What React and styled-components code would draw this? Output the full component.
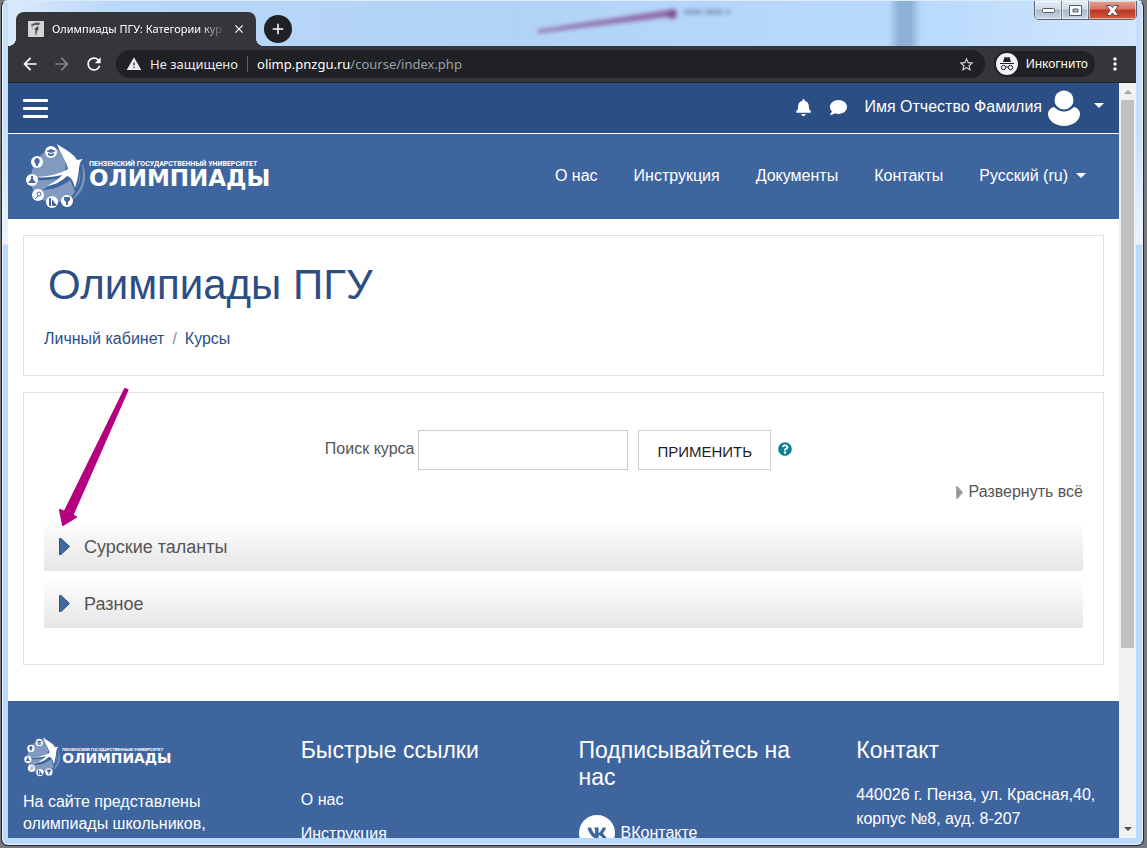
import React from "react";
import styled, { createGlobalStyle } from "styled-components";
import { FaBell, FaComment, FaQuestionCircle, FaVk } from "react-icons/fa";
import {
  MdAdd,
  MdArrowBack,
  MdArrowForward,
  MdClose,
  MdMoreVert,
  MdRefresh,
  MdStarBorder,
  MdWarning,
} from "react-icons/md";

const GlobalStyle = createGlobalStyle`
  * {
    box-sizing: border-box;
  }
  body {
    margin: 0;
    background: #77797c;
    font-family: "Liberation Sans", Arial, sans-serif;
    font-size: 16px;
    line-height: 24px;
  }
  button {
    padding: 0;
    border: 0;
    background: none;
    color: inherit;
    font: inherit;
  }
  a {
    color: inherit;
    text-decoration: none;
  }
  svg {
    display: block;
  }
  h1, h2, p, ul {
    margin: 0;
    padding: 0;
    font-weight: normal;
    list-style: none;
  }
`;

const Window = styled.div`
  position: relative;
  display: flex;
  flex-direction: column;
  height: calc(100vh - 2px);
  margin: 0 3px 2px 1px;
  padding: 0 7px 7px 6px;
  overflow: hidden;
  border: 1px solid #1f2733;
  border-top-color: #dcebf8;
  border-radius: 7px;
  box-shadow: inset 0 0 0 1px #e9f4ff;
  background: linear-gradient(
    #c4dffb 0,
    #c6e0fc 130px,
    #edf5fe 243px,
    #b9dafd 244px
  );
`;

const TitleBar = styled.div`
  display: flex;
  align-items: flex-end;
  flex: none;
  height: 45px;
  padding-left: 8px;
  background: linear-gradient(
    90deg,
    #dbeafc 0,
    #b9d7f8 110px,
    #b2d3f6 45%,
    #b8dafd 78%,
    #8db0d6 79%,
    #8db0d6 80%,
    #b8dafd 81%,
    #d2e6fd 100%
  );
`;

const Tab = styled.div`
  position: relative;
  display: flex;
  align-items: center;
  width: 240px;
  height: 34px;
  padding: 0 10px 0 12px;
  border-radius: 8px 8px 0 0;
  background: #35363a;
  color: #fff;
  font: 11px/16px "Noto Sans", sans-serif;
  &::before,
  &::after {
    content: "";
    position: absolute;
    bottom: 0;
    width: 8px;
    height: 8px;
  }
  &::before {
    left: -8px;
    background: radial-gradient(circle at 0 0, transparent 8px, #35363a 8px);
  }
  &::after {
    right: -8px;
    background: radial-gradient(circle at 100% 0, transparent 8px, #35363a 8px);
  }
`;

const TabTitle = styled.span`
  flex: 1;
  margin: 0 6px 0 8px;
  white-space: nowrap;
  mask-image: linear-gradient(90deg, #000 85%, transparent);
`;

const IconButton = styled.button`
  display: flex;
  align-items: center;
  justify-content: center;
  flex: none;
  width: ${(props) => props.$size || 32}px;
  height: ${(props) => props.$size || 32}px;
  color: ${(props) => props.$color || "#fff"};
`;

const NewTab = styled(IconButton)`
  margin: 0 0 3px 8px;
  border-radius: 50%;
  background: #202124;
`;

const Blur = styled.svg`
  position: absolute;
  top: 0;
  left: 518px;
  width: 230px;
  height: 44px;
  filter: blur(2px);
`;

const Controls = styled.div`
  position: absolute;
  top: -1px;
  right: 6px;
  display: flex;
  border: 1px solid #59636f;
  border-radius: 0 0 5px 5px;
  overflow: hidden;
`;

const Control = styled.button`
  display: flex;
  align-items: center;
  justify-content: center;
  width: ${(props) => (props.$close ? 47 : 27)}px;
  height: 18px;
  border-right: ${(props) => (props.$close ? 0 : "1px solid #6d7886")};
  box-shadow: inset 0 0 0 1px #ffffff88;
  background: ${(props) =>
    props.$close
      ? "linear-gradient(#e3a091, #d67463 45%, #bc3524 50%, #d15c3c)"
      : "linear-gradient(#e7edf5, #cfd9e6 45%, #a9b9cb 50%, #c7d7e8)"};
`;

const Toolbar = styled.div`
  display: flex;
  align-items: center;
  flex: none;
  height: 37px;
  padding-right: 5px;
  border-bottom: 1px solid #27282b;
  background: #35363a;
  color: #fff;
`;

const NavButtons = styled.div`
  display: flex;
  width: 108px;
  padding-left: 6px;
`;

const AddressBar = styled.div`
  display: flex;
  align-items: center;
  flex: 1;
  height: 28px;
  padding: 0 2px 0 10px;
  border-radius: 14px;
  background: #202124;
  color: #e8eaed;
  font: 13px/20px "Noto Sans", sans-serif;
`;

const Security = styled.span`
  margin-left: 8px;
  padding-right: 9px;
  border-right: 1px solid #5f6368;
  line-height: 16px;
`;

const Url = styled.span`
  flex: 1;
  margin-left: 9px;
  color: #9aa0a6;
  b {
    color: #fff;
    font-weight: normal;
  }
`;

const Incognito = styled.div`
  display: flex;
  align-items: center;
  gap: 8px;
  height: 26px;
  margin: 0 4px 0 9px;
  padding: 0 7px 0 2px;
  border-radius: 13px;
  background: #202124;
  font: 12px/16px "Noto Sans", sans-serif;
`;

const Viewport = styled.div`
  display: flex;
  flex: 1;
  min-height: 0;
`;

const Page = styled.div`
  flex: 1;
  overflow: hidden;
  background: #fff;
`;

const Scrollbar = styled.div`
  display: flex;
  flex-direction: column;
  align-items: center;
  width: 17px;
  background: #f1f1f1;
`;

const ScrollTrack = styled.div`
  flex: 1;
  width: 13px;
`;

const ScrollThumb = styled.div`
  height: 76%;
  background: #c1c1c1;
`;

const UserBar = styled.div`
  display: flex;
  align-items: center;
  height: 51px;
  padding: 0 15px;
  border-bottom: 1px solid #fff;
  background: #2b4e84;
  color: #fff;
`;

const MenuButton = styled.button`
  display: flex;
  flex-direction: column;
  gap: 5px;
  margin-right: auto;
  span {
    width: 25px;
    height: 3px;
    border-radius: 1px;
    background: #fff;
  }
`;

const BarIcon = styled(IconButton)`
  width: 35px;
  padding-bottom: 2px;
`;

const UserMenu = styled.button`
  display: flex;
  align-items: center;
  margin-left: 8px;
  padding-bottom: 2px;
  white-space: nowrap;
`;

const Avatar = styled.svg`
  margin: 2px 13px 0 5px;
`;

const Caret = styled.span`
  display: inline-block;
  margin-bottom: ${(props) => (props.$raised ? 4 : 0)}px;
  border: 5px solid transparent;
  border-top-color: #fff;
  border-bottom: 0;
`;

const Header = styled.header`
  display: flex;
  align-items: center;
  justify-content: space-between;
  height: 85px;
  padding: 0 33px 0 16px;
  background: #3f659f;
  color: #fff;
`;

const Nav = styled.nav`
  display: flex;
  align-items: center;
  gap: 36px;
  padding-bottom: 2px;
  button {
    display: flex;
    align-items: center;
    gap: 8px;
  }
`;

const Main = styled.main`
  display: flex;
  flex-direction: column;
  gap: 16px;
  padding: 16px 15px 36px;
`;

const Card = styled.section`
  padding: ${(props) => props.$padding};
  border: 1px solid #dee0e2;
  color: #555;
`;

const PageTitle = styled.h1`
  padding-left: 4px;
  color: #2b4e84;
  font-size: 42px;
  line-height: 50px;
`;

const Breadcrumbs = styled.nav`
  display: flex;
  gap: 8px;
  margin-top: 17px;
  color: #2b4e84;
  span {
    color: #868e96;
  }
`;

const SearchForm = styled.form`
  display: flex;
  align-items: center;
  justify-content: center;
  padding-right: 10px;
  label {
    margin: 0 4px 2px 0;
  }
`;

const SearchInput = styled.input`
  width: 210px;
  height: 40px;
  padding: 0 12px;
  border: 1px solid #c9cccf;
  font: inherit;
`;

const SubmitButton = styled.button`
  height: 40px;
  margin: 0 7px 0 10px;
  padding: 4px 18px 0;
  border: 1px solid #ced1d4;
  color: #1d2125;
  font-size: 15px;
`;

const HelpButton = styled(IconButton)`
  width: 14px;
  padding-bottom: 2px;
  color: #0c7f95;
`;

const ExpandAll = styled.button`
  display: flex;
  align-items: center;
  gap: 6px;
  margin: 10px 0 20px auto;
  color: #555;
`;

const Categories = styled.ul`
  display: flex;
  flex-direction: column;
  gap: 10px;
`;

const Category = styled.button`
  display: flex;
  align-items: center;
  gap: 14px;
  width: 100%;
  height: 47px;
  padding: 0 0 2px 15px;
  background: linear-gradient(#fdfdfd, #e6e6e6);
  font-size: 18px;
`;

const Footer = styled.footer`
  display: grid;
  grid-template-columns: repeat(4, 1fr);
  padding: 36px 0;
  background: #3f659f;
  color: #fff;
`;

const FooterColumn = styled.div`
  min-width: 0;
  padding: 0 15px;
`;

const About = styled.p`
  margin-top: 13px;
  line-height: 22px;
`;

const FooterTitle = styled.h2`
  margin-bottom: ${(props) => props.$gap}px;
  font-size: 23px;
  line-height: 27px;
`;

const FooterLinks = styled.ul`
  display: flex;
  flex-direction: column;
  gap: 10px;
`;

const Social = styled.a`
  display: flex;
  align-items: center;
  gap: 6px;
`;

const SocialIcon = styled.span`
  display: flex;
  align-items: center;
  justify-content: center;
  width: 36px;
  height: 36px;
  border-radius: 50%;
  background: #fff;
  color: #3f659f;
`;

const Pointer = styled.svg`
  position: absolute;
  top: 385px;
  left: 52px;
  pointer-events: none;
`;

function Triangle({ width, height, color, stroke }) {
  return (
    <svg width={width} height={height} viewBox='0 0 11 17' preserveAspectRatio='none'>
      <path d='M.5.5h1.5l8.5 8-8.5 8H.5z' fill={color} stroke={stroke || color} />
    </svg>
  );
}

function Logo({ width }) {
  return (
    <svg width={width} viewBox='0 0 249 68' role='img' aria-label='Олимпиады'>
      <path
        d='M18 11C27 2 43 5 51 15c8 10 7 27-3 38-9 8-26 9-35 0C3 42 6 22 18 11Z'
        fill='#819abf'
      />
      <path d='M57 19c5 15 0 29-11 39 16-8 19-28 11-39Z' fill='#7893bd' />
      <path
        d='M31 0c9 7 21 9 23 17l6 0c-5 7-3 16-8 33-3-5-4-10-6-13-8 6-16 10-28 10 6-4 13-7 19-12-11 2-25 4-33-1 13 1 24-2 36-4C46 18 35 10 31 0Z'
        fill='#3f659f'
      />
      <path
        d='M33 1c9 6 17 10 20 16l6-1c-6 5-2 12-8 29-2-8-4-11-8-12-6 6-13 9-20 10 6-3 12-7 15-11-9 2-19 3-29 2 16 0 29-4 35-8C43 19 36 10 33 1Z'
        fill='#fff'
      />
      <g fill='#fff'>
        <circle cx='27' cy='9' r='6' />
        <circle cx='13' cy='19' r='6' />
        <circle cx='8' cy='37' r='6' />
        <circle cx='14' cy='52' r='6' />
        <circle cx='28' cy='59' r='6' />
        <circle cx='43' cy='58' r='6' />
      </g>
      <g fill='#48699d'>
        <path d='m22 8 5-2 5 2-5 2zM24 10l3 1 3-1v2q-3 2-6 0z' />
        <path d='M13 15a3 3 0 0 1 2 5l-1 2h-2l-1-2a3 3 0 0 1 2-5zM12 22h2v1h-2z' />
        <path d='M7 33h2v3l3 4H4l3-4z' />
        <path d='M25 55h2v8h-2zM28 56l5 7h-5z' />
        <path d='M40 54h6v3l-2 2v3h-2v-3l-2-2z' />
      </g>
      <circle cx='15' cy='51' r='2' fill='none' stroke='#48699d' />
      <path d='m14 53-3 3' stroke='#48699d' />
      <text
        x='65'
        y='23'
        fill='#fff'
        fontFamily='Roboto, sans-serif'
        fontWeight='700'
        fontSize='7'
      >
        ПЕНЗЕНСКИЙ ГОСУДАРСТВЕННЫЙ УНИВЕРСИТЕТ
      </text>
      <text
        x='65'
        y='43'
        fill='#fff'
        fontFamily='DejaVu Sans, sans-serif'
        fontWeight='700'
        fontSize='23'
      >
        ОЛИМПИАДЫ
      </text>
    </svg>
  );
}

function BrowserChrome() {
  return (
    <>
      <TitleBar>
        <Blur viewBox='0 0 230 44' aria-hidden='true'>
          <path d='M17 29 148 9v7L18 32z' fill='#8f67a6' />
          <circle cx='152' cy='13' r='5' fill='#804f94' />
          <path d='M164 11h46' stroke='#87a4c9' strokeWidth='5' strokeDasharray='18 3' />
        </Blur>
        <Tab>
          <svg width='16' height='16' viewBox='0 0 16 16'>
            <rect width='16' height='16' rx='1' fill='#d5d5d5' />
            <path
              d='M3 4q4-3 9-2l-1 2q-4-1-7 1zM4 5.500l.500 3M8 6.500l2-1 .500 3-1.500 1-.500 4h-1V9l-1-1z'
              fill='#444'
              stroke='#777'
              strokeWidth='.5'
            />
          </svg>
          <TabTitle>Олимпиады ПГУ: Категории кур</TabTitle>
          <IconButton $size={14} aria-label='Закрыть вкладку'>
            <MdClose size={14} />
          </IconButton>
        </Tab>
        <NewTab $size={28} aria-label='Новая вкладка'>
          <MdAdd size={18} />
        </NewTab>
        <Controls>
          <Control aria-label='Свернуть'>
            <svg width='13' height='6'>
              <rect x='.5' y='1.5' width='12' height='4' rx='1' fill='#fff' stroke='#525b68' />
            </svg>
          </Control>
          <Control aria-label='Развернуть'>
            <svg width='13' height='11'>
              <path
                d='M.5.5h12v10H.5zM4 4v3h5V4z'
                fill='#fff'
                fillRule='evenodd'
                stroke='#525b68'
              />
            </svg>
          </Control>
          <Control $close aria-label='Закрыть'>
            <svg width='13' height='11' viewBox='0 0 13 11'>
              <path
                d='M.5.5h4l2 2 2-2h4L9 5.500l3.500 5h-4l-2-2.500-2 2.500h-4L4 5.500z'
                fill='#fff'
                stroke='#5c4550'
              />
            </svg>
          </Control>
        </Controls>
      </TitleBar>
      <Toolbar>
        <NavButtons>
          <IconButton aria-label='Назад'>
            <MdArrowBack size={20} />
          </IconButton>
          <IconButton $color='#85878a' aria-label='Вперёд'>
            <MdArrowForward size={20} />
          </IconButton>
          <IconButton aria-label='Обновить'>
            <MdRefresh size={20} />
          </IconButton>
        </NavButtons>
        <AddressBar>
          <MdWarning size={16} />
          <Security>Не защищено</Security>
          <Url>
            <b>olimp.pnzgu.ru</b>/course/index.php
          </Url>
          <IconButton $color='#d0d2d5' aria-label='В закладки'>
            <MdStarBorder size={17} />
          </IconButton>
        </AddressBar>
        <Incognito>
          <svg width='22' height='22' viewBox='0 0 22 22'>
            <circle cx='11' cy='11' r='11' fill='#f1f3f4' />
            <path d='M4 10h14v1H4zM7 9l1.500-5 2.500.6 2.500-.6L15 9z' fill='#202124' />
            <g fill='none' stroke='#202124'>
              <circle cx='7.500' cy='14.500' r='2.200' />
              <circle cx='14.500' cy='14.500' r='2.200' />
              <path d='M9.700 14.200q1.300-.8 2.600 0' />
            </g>
          </svg>
          Инкогнито
        </Incognito>
        <IconButton aria-label='Меню'>
          <MdMoreVert size={20} />
        </IconButton>
      </Toolbar>
    </>
  );
}

const categories = ["Сурские таланты", "Разное"];
const navItems = ["О нас", "Инструкция", "Документы", "Контакты"];

export default function App() {
  return (
    <>
      <GlobalStyle />
      <Window>
        <BrowserChrome />
        <Viewport>
          <Page>
            <UserBar>
              <MenuButton aria-label='Боковая панель'>
                <span />
                <span />
                <span />
              </MenuButton>
              <BarIcon aria-label='Уведомления'>
                <FaBell size={17} />
              </BarIcon>
              <BarIcon aria-label='Сообщения'>
                <FaComment size={17} />
              </BarIcon>
              <UserMenu>
                Имя Отчество Фамилия
                <Avatar width='34' height='36' viewBox='0 0 34 36' fill='#fff'>
                  <circle cx='17' cy='10' r='9.500' />
                  <path d='M7 17q10 9 20 0c4 1 6 4 6 7 0 7-8 12-16 12S1 31 1 24c0-3 2-6 6-7Z' />
                </Avatar>
                <Caret $raised />
              </UserMenu>
            </UserBar>
            <Header>
              <a href='#home'>
                <Logo width={249} />
              </a>
              <Nav>
                {navItems.map((item) => (
                  <a href='#nav' key={item}>
                    {item}
                  </a>
                ))}
                <button>
                  Русский (ru) <Caret />
                </button>
              </Nav>
            </Header>
            <Main>
              <Card $padding='24px 20px 24px'>
                <PageTitle>Олимпиады ПГУ</PageTitle>
                <Breadcrumbs>
                  <a href='#my'>Личный кабинет</a>
                  <span>/</span>
                  <a href='#courses'>Курсы</a>
                </Breadcrumbs>
              </Card>
              <Card $padding='37px 20px 36px'>
                <SearchForm onSubmit={(e) => e.preventDefault()}>
                  <label htmlFor='search'>Поиск курса</label>
                  <SearchInput id='search' type='text' />
                  <SubmitButton type='submit'>ПРИМЕНИТЬ</SubmitButton>
                  <HelpButton type='button' aria-label='Справка'>
                    <FaQuestionCircle size={14} />
                  </HelpButton>
                </SearchForm>
                <ExpandAll>
                  <Triangle width={7} height={13} color='#999' />
                  Развернуть всё
                </ExpandAll>
                <Categories>
                  {categories.map((name) => (
                    <li key={name}>
                      <Category>
                        <Triangle width={11} height={17} color='#41699f' stroke='#2f5384' />
                        {name}
                      </Category>
                    </li>
                  ))}
                </Categories>
              </Card>
            </Main>
            <Footer>
              <FooterColumn>
                <Logo width={150} />
                <About>На сайте представлены олимпиады школьников,</About>
              </FooterColumn>
              <FooterColumn>
                <FooterTitle $gap={24}>Быстрые ссылки</FooterTitle>
                <FooterLinks>
                  <li>
                    <a href='#about'>О нас</a>
                  </li>
                  <li>
                    <a href='#manual'>Инструкция</a>
                  </li>
                </FooterLinks>
              </FooterColumn>
              <FooterColumn>
                <FooterTitle $gap={24}>Подписывайтесь на нас</FooterTitle>
                <Social href='#vk'>
                  <SocialIcon>
                    <FaVk size={20} />
                  </SocialIcon>
                  ВКонтакте
                </Social>
              </FooterColumn>
              <FooterColumn>
                <FooterTitle $gap={19}>Контакт</FooterTitle>
                <p>440026 г. Пенза, ул. Красная,40, корпус №8, ауд. 8-207</p>
              </FooterColumn>
            </Footer>
          </Page>
          <Scrollbar aria-hidden='true'>
            <svg width='17' height='17'>
              <path d='m5 11 4-4 4 4z' fill='#a3a3a3' />
            </svg>
            <ScrollTrack>
              <ScrollThumb />
            </ScrollTrack>
            <svg width='17' height='17'>
              <path d='m5 6 4 4 4-4z' fill='#505050' />
            </svg>
          </Scrollbar>
        </Viewport>
        <Pointer width='80' height='144' viewBox='0 0 80 144' aria-hidden='true'>
          <path
            d='M71 3 73.500 4 18.500 129 22 131 9 139 6 124 10.500 126Z'
            fill='#b4007f'
            stroke='#b4007f'
            strokeWidth='2'
            strokeLinejoin='round'
          />
        </Pointer>
      </Window>
    </>
  );
}
